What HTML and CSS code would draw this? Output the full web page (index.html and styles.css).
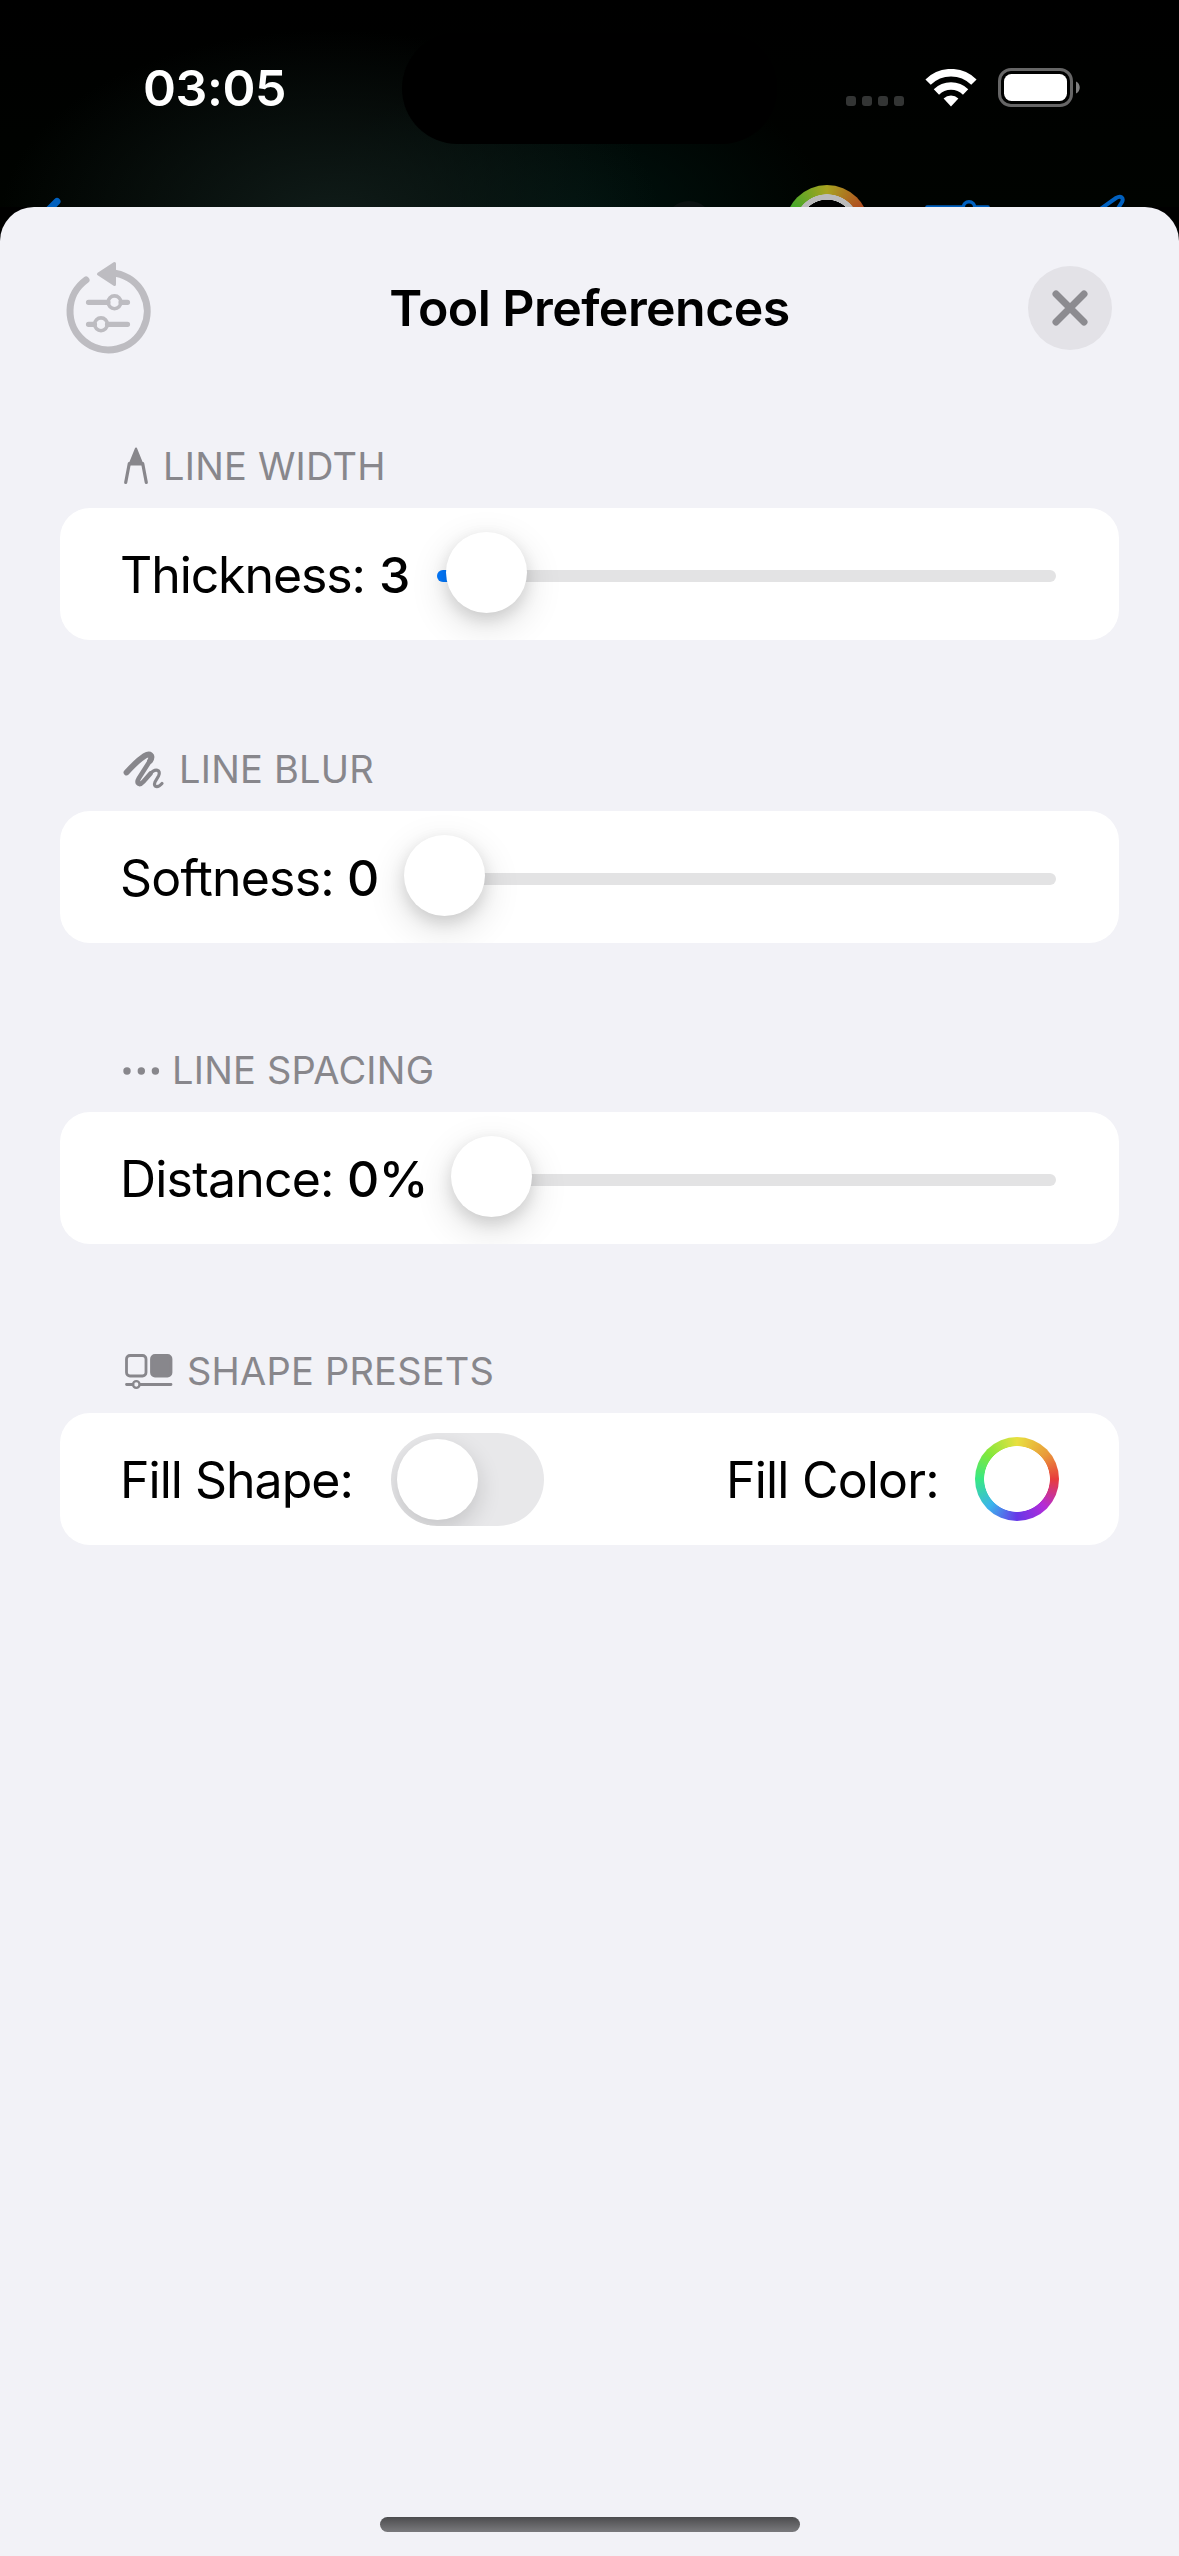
FILE: index.html
```html
<!DOCTYPE html>
<html lang="en">
<head>
<meta charset="utf-8">
<title>Tool Preferences</title>
<link rel="stylesheet" href="styles.css">
</head>
<body>
<div class="screen">
  <div class="backdrop">
    <div class="status">
      <span class="time">03:05</span>
      <span class="island"></span>
      <span class="signal"><i></i><i></i><i></i><i></i></span>
      <svg class="wifi" width="52" height="38" viewBox="0 0 52 38"><g fill="none" stroke="#fff" stroke-width="7.6"><path d="M3.1 13.1a32.6 32.6 0 0 1 45.8 0"/><path d="M11.4 22.9a21 21 0 0 1 29.2 0"/></g><path d="M18.6 29.6a10.6 10.6 0 0 1 14.8 0L26 37.6z" fill="#fff"/></svg>
      <svg class="battery" width="83" height="39" viewBox="0 0 83 39"><rect x="1.5" y="1.5" width="72" height="36" rx="11.5" fill="none" stroke="#666" stroke-width="3"/><rect x="6" y="6" width="63" height="27" rx="7.5" fill="#fff"/><path d="M78 13.5c5 2 5 10 0 12z" fill="#808080"/></svg>
    </div>
    <div class="toolbar">
      <svg class="back" width="24" height="27" viewBox="0 0 24 27"><path d="M19 21.500L8 32.500" stroke="#0060bf" stroke-width="7" stroke-linecap="round"/></svg>
      <svg class="ghost" width="48" height="27" viewBox="0 0 48 27"><circle cx="24" cy="45" r="24" fill="#0c1212"/></svg>
      <span class="wheel"></span>
      <svg class="sliders" width="66" height="27" viewBox="0 0 66 27"><g fill="none" stroke="#0060bf" stroke-width="3.600" stroke-linecap="round"><path d="M2 27H38M50 27H63"/><circle cx="44" cy="27.500" r="5.800"/></g></svg>
      <svg class="pen" width="30" height="27" viewBox="0 0 30 27"><path d="M2 30L19 18C24 15 27 18 25 22L20 30" fill="none" stroke="#0060bf" stroke-width="4"/></svg>
    </div>
  </div>
  <div class="sheet">
    <div class="header">
      <svg class="reset" width="86" height="94" viewBox="66 261 86 94"><path d="M117 273.400A38.600 38.600 0 1 1 87 280" fill="none" stroke="#bdbcc1" stroke-width="7" stroke-linecap="round"/><path d="M99.500 274L115.500 263.500V284.500z" fill="#bdbcc1" stroke="#bdbcc1" stroke-width="3" stroke-linejoin="round"/><g fill="none" stroke="#bdbcc1" stroke-width="5.200" stroke-linecap="round"><path d="M89.500 302.300H109M122 302.300H128.500M89.500 324.300H95.500M108.500 324.300H128.500"/><g stroke-width="3.600"><circle cx="115.500" cy="302.300" r="6.400"/><circle cx="102" cy="324.300" r="6.400"/></g></g></svg>
      <h1 class="title">Tool Preferences</h1>
      <div class="close"><svg width="36" height="36" viewBox="0 0 36 36"><path d="M4 4L32 32M32 4L4 32" stroke="#8c8b90" stroke-width="7" stroke-linecap="round"/></svg></div>
    </div>

    <section class="section first">
      <h2 class="caption"><svg class="cap-width" width="26" height="38" viewBox="0 0 26 38"><path d="M13 1.500L19.500 17.500H6.500z" fill="#88878c" stroke="#88878c" stroke-width="2" stroke-linejoin="round"/><path d="M6.300 16.500L2.700 35.500M19.700 16.500L23.300 35.500" stroke="#88878c" stroke-width="3.200" stroke-linecap="round"/></svg><span>LINE WIDTH</span></h2>
      <div class="card"><span class="label l-thick">Thickness:</span><span class="value v-thick">3</span><div class="slider"><span class="fill"></span><span class="thumb moved"></span></div></div>
    </section>
    <section class="section">
      <h2 class="caption"><svg class="cap-blur" width="42" height="40" viewBox="0 0 42 40"><g fill="none" stroke="#88878c" stroke-linecap="round" stroke-linejoin="round"><path stroke-width="5.800" d="M3.500 22.500C9 16.500 16 9.500 21.500 6C27 2.500 30.500 5.500 27 11"/><path stroke-width="4.600" d="M27.500 10L16 28C12.500 34 16.500 36 20.500 31.500L27.500 23.500"/><path stroke-width="3.200" d="M26.500 24.500C32.500 17.500 38.500 20 35.500 26L32 32C30 37 34.500 38.500 39 33.500"/></g></svg><span>LINE BLUR</span></h2>
      <div class="card"><span class="label l-soft">Softness:</span><span class="value v-soft">0</span><div class="slider"><span class="thumb"></span></div></div>
    </section>
    <section class="section">
      <h2 class="caption"><svg class="cap-dots" width="37" height="8" viewBox="0 0 37 8"><g fill="#88878c"><circle cx="4" cy="4" r="3.700"/><circle cx="18.300" cy="4" r="3.700"/><circle cx="32.400" cy="4" r="3.700"/></g></svg><span>LINE SPACING</span></h2>
      <div class="card"><span class="label l-dist">Distance:</span><span class="value v-dist">0<b class="pct">%</b></span><div class="slider"><span class="thumb"></span></div></div>
    </section>
    <section class="section">
      <h2 class="caption"><svg class="cap-shape" width="48" height="36" viewBox="0 0 48 36"><g fill="none" stroke="#88878c" stroke-width="2.800" stroke-linecap="round"><rect x="1.500" y="1.500" width="19.500" height="20.500" rx="3.500"/><rect x="26.500" y="1.500" width="19.500" height="20.500" rx="3.500" fill="#88878c"/><path d="M1.500 30.500H8M15 30.500H46"/><circle cx="11.300" cy="30.500" r="3.300" stroke-width="2.300"/></g></svg><span>SHAPE PRESETS</span></h2>
      <div class="card"><span class="label l-fs">Fill Shape:</span><span class="toggle"><span class="knob"></span></span><span class="label l-fc">Fill Color:</span><span class="ring"></span></div>
    </section>
    <div class="home"></div>
  </div>
</div>
</body>
</html>
```
FILE: styles.css
```css
* { box-sizing: border-box; }
body { margin: 0; background: #000; font-family: Inter, "Liberation Sans", sans-serif; }
.screen { width: 1179px; height: 2556px; display: flex; flex-direction: column; background: #000; overflow: hidden; }

.backdrop {
  height: 207px; flex: none; overflow: hidden; display: flex; flex-direction: column;
  background:
    radial-gradient(ellipse 330px 190px at 330px 220px, #101c19 0%, rgba(16, 28, 25, 0) 100%),
    radial-gradient(ellipse 260px 150px at 570px 215px, #00130f 0%, rgba(0, 19, 15, 0) 100%),
    linear-gradient(#000, #000300);
}
.status { height: 180px; flex: none; display: flex; align-items: flex-start; }
.time { width: 259px; margin-left: 143px; padding-top: 58px; font-size: 50px; line-height: 60px; font-weight: 600; color: #fff; letter-spacing: -0.4px; white-space: nowrap; }
.island { width: 375px; height: 111px; margin-top: 33px; border-radius: 56px; background: #000; }
.signal { display: flex; gap: 6px; margin: 96px 0 0 69px; }
.signal i { width: 10px; height: 10px; border-radius: 3px; background: #333534; }
.wifi { margin: 69px 0 0 21px; }
.battery { margin: 68px 0 0 21px; }

.toolbar { height: 27px; display: flex; }
.toolbar > * { flex: none; }
.back { margin-left: 38px; }
.ghost { margin-left: 603px; }
.wheel { width: 84px; height: 84px; margin: 5px 0 0 72px; border-radius: 50%;
  background: radial-gradient(circle, #000 27px, #bbb 27.500px, #bbb 32.500px, transparent 33px), conic-gradient(#a8a320, #b05a20 50deg, #a22 90deg, #72a 150deg, #3a9 240deg, #45a82a 300deg, #a8a320); }
.sliders { margin-left: 56px; }
.pen { margin-left: 106px; }

.sheet { flex: 1; display: flex; flex-direction: column; background: #f2f2f7; border-radius: 34px 34px 0 0; }
.header { height: 204px; flex: none; display: flex; align-items: flex-start; padding: 54px 67px 0 65px; justify-content: space-between; }
.title { margin: 17px 0 0; font-size: 50px; line-height: 60px; font-weight: 600; letter-spacing: -0.55px; white-space: nowrap; color: #000; }
.close { width: 84px; height: 84px; margin-top: 5px; border-radius: 50%; background: #e3e2e7; display: flex; align-items: center; justify-content: center; }

.section { height: 301px; flex: none; padding: 0 60px; }
.first { height: 303px; }
.caption { height: 97px; margin: 0; padding-left: 63px; display: flex; align-items: flex-start; font-size: 38px; line-height: 46px; font-weight: 400; letter-spacing: 0.22px; color: #88878c; white-space: nowrap; }
.caption span { margin-top: 32px; }
.cap-width { margin: 36px 14px 0 0; }
.cap-blur { margin: 36px 14px 0 0; }
.cap-dots { margin: 52px 12px 0 0; }
.cap-shape { margin: 38px 14px 0 2px; }

.card { height: 132px; border-radius: 30px; background: #fff; padding: 0 63px 0 60px; display: flex; align-items: center; overflow: hidden; font-size: 50px; line-height: 60px; color: #000; white-space: nowrap; }
.label { flex: none; margin-top: 2px; letter-spacing: -0.8px; }
.value { flex: none; margin-top: 2px; font-weight: 500; }
.pct { font-weight: 500; }
.l-thick { width: 259px; letter-spacing: -1.1px; }
.v-thick { width: 58px; }
.l-soft { width: 227px; }
.v-soft { width: 59px; }
.l-dist { width: 227px; }
.v-dist { width: 106px; letter-spacing: -0.5px; }
.slider { position: relative; flex: 1; height: 12px; margin-top: 4px; border-radius: 6px; background: #e3e3e4; }
.fill { display: block; width: 40px; height: 12px; border-radius: 6px; background: #047aff; }
.thumb { position: absolute; left: -2px; top: -38px; width: 81px; height: 81px; border-radius: 50%; background: #fff; box-shadow: 0 12px 38px rgba(0, 0, 0, .14), 0 6px 16px rgba(0, 0, 0, .12); }
.moved { left: 9px; }
.l-fs { width: 271px; letter-spacing: -1px; }
.toggle { flex: none; width: 153px; height: 93px; padding: 6px; border-radius: 47px; background: #e8e8ea; overflow: hidden; }
.knob { display: block; width: 81px; height: 81px; border-radius: 50%; background: #fff; box-shadow: 0 9px 24px rgba(0, 0, 0, .16); }
.l-fc { margin-left: 182px; width: 249px; }
.ring { flex: none; width: 84px; height: 84px; border-radius: 50%; background: radial-gradient(circle, #fff 32.500px, transparent 33.200px), conic-gradient(#e8e040, #e99a3a 50deg, #e83c3c 90deg, #b32cd8 135deg, #6638e8 180deg, #3cb4ec 225deg, #38e884 270deg, #80e83c 310deg, #e8e040); }
.home { width: 420px; height: 15px; margin: auto auto 24px; border-radius: 8px; background: linear-gradient(#4c4c4e, #7a7a7d); }
```
